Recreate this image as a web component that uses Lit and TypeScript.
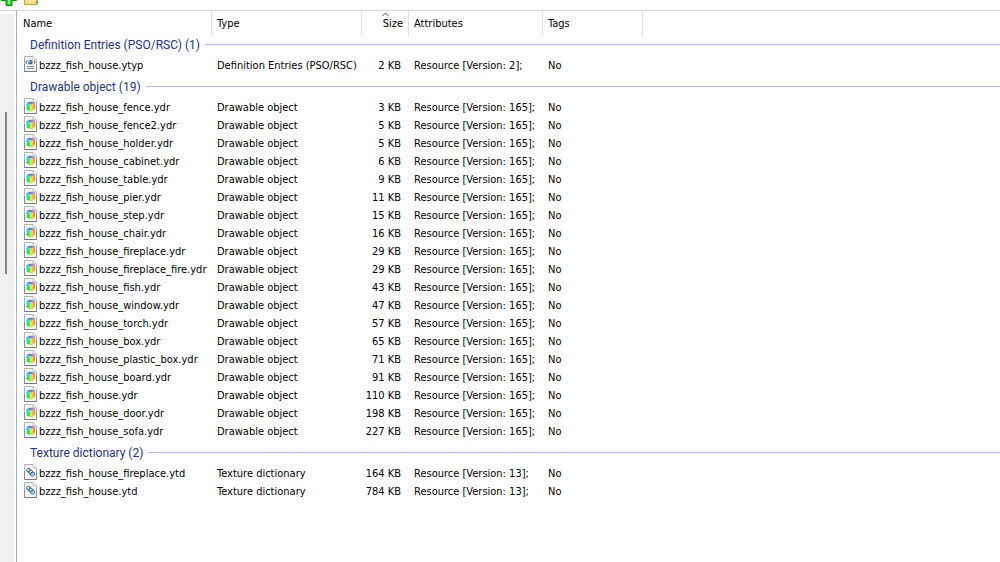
import { LitElement, html, css, svg } from "lit";
import { customElement, property } from "lit/decorators.js";

type Kind = "ytyp" | "ydr" | "ytd";

interface Entry {
  name: string;
  size: number;
}

interface Group {
  kind: Kind;
  type: string;
  version: number;
  entries: Entry[];
}

const GROUPS: Group[] = [
  {
    kind: "ytyp",
    type: "Definition Entries (PSO/RSC)",
    version: 2,
    entries: [{ name: "bzzz_fish_house", size: 2 }],
  },
  {
    kind: "ydr",
    type: "Drawable object",
    version: 165,
    entries: [
      { name: "bzzz_fish_house_fence", size: 3 },
      { name: "bzzz_fish_house_fence2", size: 5 },
      { name: "bzzz_fish_house_holder", size: 5 },
      { name: "bzzz_fish_house_cabinet", size: 6 },
      { name: "bzzz_fish_house_table", size: 9 },
      { name: "bzzz_fish_house_pier", size: 11 },
      { name: "bzzz_fish_house_step", size: 15 },
      { name: "bzzz_fish_house_chair", size: 16 },
      { name: "bzzz_fish_house_fireplace", size: 29 },
      { name: "bzzz_fish_house_fireplace_fire", size: 29 },
      { name: "bzzz_fish_house_fish", size: 43 },
      { name: "bzzz_fish_house_window", size: 47 },
      { name: "bzzz_fish_house_torch", size: 57 },
      { name: "bzzz_fish_house_box", size: 65 },
      { name: "bzzz_fish_house_plastic_box", size: 71 },
      { name: "bzzz_fish_house_board", size: 91 },
      { name: "bzzz_fish_house", size: 110 },
      { name: "bzzz_fish_house_door", size: 198 },
      { name: "bzzz_fish_house_sofa", size: 227 },
    ],
  },
  {
    kind: "ytd",
    type: "Texture dictionary",
    version: 13,
    entries: [
      { name: "bzzz_fish_house_fireplace", size: 164 },
      { name: "bzzz_fish_house", size: 784 },
    ],
  },
];

const GLYPHS = {
  ytyp: svg`
    <path d="M3.4 4.6 1.6 6.3l1.8 1.7M9.6 4.6l1.8 1.7-1.8 1.7" fill="none" stroke="#555"/>
    <circle cx="6.5" cy="6.3" r="2.2" fill="#2e6fa8"/>
    <circle cx="6" cy="5.7" r="1" fill="#6fd3b4"/>
    <path d="M3 10.5h7M3 12.5h7" stroke="#8d8fa8"/>`,
  ydr: svg`
    <path d="M2 4.5 5 3.2l6.2.9v6.6L8 13.4l-6-1.6z" fill="#8be6ea"/>
    <path d="M3 5.4l5 .9v3L3 8.6z" fill="#1adcf0"/>
    <path d="M3 8.4l5 .9v3.6L3 11.6z" fill="#2be04a"/>
    <path d="M5.6 5.9 8 6.3v6.6l-2.4-.7z" fill="#d0f32a"/>
    <path d="M8 6.3 11 4.9v5.4L8 12.9z" fill="#ffc63a"/>
    <path d="M9.6 5.6 11 4.9v5.4L9.6 11.5z" fill="#f58a4c"/>
    <path d="M3 5.2 5.4 3.9l2.8.4L6.4 6z" fill="#5a78e8"/>
    <path d="M7.4 4.2l3.6.5L8 6.3 5.8 5.9z" fill="#c65ad4"/>`,
  ytd: svg`
    <g fill="none" stroke="#376a99">
      <circle cx="4.3" cy="6" r="1.7"/>
      <circle cx="6.6" cy="7.8" r="1.8"/>
      <circle cx="8.6" cy="10.2" r="2"/>
      <path d="M5.4 4.6 10.4 9M3.2 7.3l3.8 4.2" stroke-width=".8"/>
    </g>
    <circle cx="8.6" cy="10.2" r=".6" fill="#376a99"/>`,
};

@customElement("file-icon")
export class FileIcon extends LitElement {
  static styles = css`
    :host {
      display: block;
      flex: none;
    }
    .page {
      display: block;
      width: 13px;
      height: 16px;
    }
  `;

  @property() kind: Kind = "ydr";

  render() {
    return html`<svg class="page" viewBox="0 0 13 16" aria-hidden="true">
      <path d="M.5.5h8.7l3.3 3.3v11.7H.5z" fill="#f7f7f7" stroke="#b2b2b2" />
      <path d="M9 .5v3.4h3.5" fill="#fff" stroke="#bdbdbd" />
      <path d="M0 15.5h13" stroke="#7c7c7c" />
      <path d="M.5 8v8M12.5 8v8" stroke="#8c8c8c" />
      ${GLYPHS[this.kind]}
    </svg>`;
  }
}

@customElement("app-root")
export class AppRoot extends LitElement {
  static styles = css`
    :host {
      display: flex;
      flex-direction: column;
      height: 100vh;
      overflow: hidden;
      background: #fff;
      color: #000;
      font: 11px/18px "DejaVu Sans Condensed", "Open Sans", sans-serif;
    }
    button {
      margin: 0;
      padding: 0;
      border: 0;
      background: none;
      color: inherit;
      font: inherit;
    }
    .toolbar {
      display: flex;
      flex: none;
      align-items: flex-end;
      gap: 7px;
      height: 10px;
      border-bottom: 1px solid #dadada;
      overflow: hidden;
    }
    .tool {
      display: block;
      height: 10px;
    }
    .tool svg {
      display: block;
    }
    .main {
      display: flex;
      flex: 1;
      min-height: 0;
    }
    .tree {
      flex: none;
      width: 14px;
      margin: 3px 2px 0 0;
      background: #f0f0f0;
    }
    .thumb {
      width: 2px;
      height: 162px;
      margin: 98px 0 0 5px;
      background: #868686;
    }
    .list {
      flex: 1;
      min-width: 0;
      border-left: 1px solid #a0b4c4;
      overflow: hidden;
    }
    .files {
      width: 100%;
      table-layout: fixed;
      border-collapse: separate;
      border-spacing: 0;
      white-space: nowrap;
    }
    .c-name {
      width: 195px;
    }
    .c-type {
      width: 150px;
    }
    .c-size {
      width: 47px;
    }
    .c-attr {
      width: 134px;
    }
    .c-tags {
      width: 100px;
    }
    th,
    td {
      padding: 0;
      text-align: left;
      font-weight: normal;
    }
    .head {
      height: 25px;
      border-right: 1px solid #e2e2e2;
      box-sizing: border-box;
    }
    .head.rest {
      border: 0;
    }
    .sort {
      position: relative;
      display: block;
      width: 100%;
      height: 24px;
      padding: 0 5px;
      text-align: left;
    }
    .sort.first {
      padding-left: 6px;
    }
    .sort.num {
      text-align: right;
    }
    .arrow {
      position: absolute;
      top: 0;
      left: 50%;
      margin-left: -3px;
    }
    .group {
      display: flex;
      align-items: center;
      gap: 5px;
      padding: 0 0 3px 13px;
      color: #1e3287;
      font-family: Roboto, "Open Sans", sans-serif;
      font-size: 12px;
    }
    .group::after {
      content: "";
      flex: 1;
      height: 1px;
      background: #b0c0e0;
    }
    .title {
      padding-top: 2px;
      line-height: 15px;
    }
    tbody + tbody .group {
      padding-top: 4px;
    }
    .cell {
      padding: 2px 0 0 5px;
      line-height: 16px;
    }
    .cell.size {
      padding: 2px 8px 0 0;
      text-align: right;
    }
    .file {
      display: flex;
      align-items: flex-start;
      gap: 2px;
      height: 18px;
      padding-left: 7px;
    }
    .name {
      padding-top: 2px;
      line-height: 16px;
    }
  `;

  private renderGroup(g: Group) {
    return html`<tbody>
      <tr>
        <th colspan="6" scope="rowgroup">
          <div class="group"><span class="title">${g.type} (${g.entries.length})</span></div>
        </th>
      </tr>
      ${g.entries.map(
        (e) => html`<tr>
          <td>
            <div class="file">
              <file-icon kind=${g.kind}></file-icon><span class="name">${e.name}.${g.kind}</span>
            </div>
          </td>
          <td class="cell">${g.type}</td>
          <td class="cell size">${e.size} KB</td>
          <td class="cell">Resource [Version: ${g.version}];</td>
          <td class="cell">No</td>
          <td></td>
        </tr>`,
      )}
    </tbody>`;
  }

  render() {
    return html`
      <div class="toolbar" role="toolbar">
        <button class="tool" aria-label="Add">
          <svg width="17" height="10" viewBox="0 0 17 10">
            <path d="M1.5-6h15v6.5H12v5H6v-5H1.5z" fill="#35c435" stroke="#128a12" />
            <path d="M8-1h2v5H8z" fill="#8eea7c" />
          </svg>
        </button>
        <button class="tool" aria-label="Folder">
          <svg width="15" height="10" viewBox="0 0 15 10">
            <path d="M.5-3h13v7.5H.5z" fill="#f6d673" stroke="#d0a548" />
            <path d="M2-2h8v5H2z" fill="#fae39a" />
            <path d="M12 1h2v2h-2z" fill="#3f9fe0" />
          </svg>
        </button>
      </div>
      <div class="main">
        <div class="tree"><div class="thumb"></div></div>
        <div class="list">
          <table class="files">
            <colgroup>
              <col class="c-name" />
              <col class="c-type" />
              <col class="c-size" />
              <col class="c-attr" />
              <col class="c-tags" />
              <col />
            </colgroup>
            <thead>
              <tr>
                <th class="head" scope="col"><button class="sort first">Name</button></th>
                <th class="head" scope="col"><button class="sort">Type</button></th>
                <th class="head" scope="col" aria-sort="ascending">
                  <button class="sort num">
                    <svg class="arrow" width="7" height="5" viewBox="0 0 7 5" aria-hidden="true">
                      <path d="M.5 4 3.5 1l3 3" fill="none" stroke="#555" />
                    </svg>
                    Size
                  </button>
                </th>
                <th class="head" scope="col"><button class="sort">Attributes</button></th>
                <th class="head" scope="col"><button class="sort">Tags</button></th>
                <td class="head rest"></td>
              </tr>
            </thead>
            ${GROUPS.map((g) => this.renderGroup(g))}
          </table>
        </div>
      </div>
    `;
  }
}
